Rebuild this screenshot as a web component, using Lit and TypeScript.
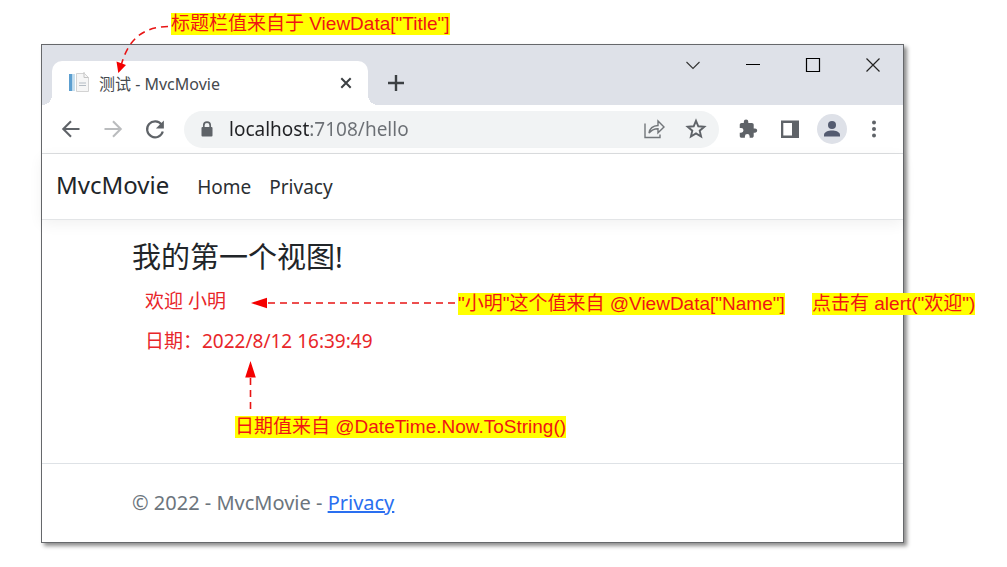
import { LitElement, html, css, svg } from 'lit';
import { customElement, property } from 'lit/decorators.js';

const glyphs = {
  doc: svg`<path d="M2 3h3.500v17H2z" fill="#5c9fd0"/><path d="M5.500 3h2.500v17H5.500z" fill="#c6dfef"/><path d="M9.500 2.500h8l4 4v14h-12z" fill="#f6f6f6" stroke="#d3d3d3"/><path d="M12 12h7M12 14.500h7" stroke="#b4bcc4" fill="none"/><path d="M17 1v5.500h4.500" stroke="#c4c4c4" fill="none"/>`,
  tabClose: svg`<path d="M7.300 7.300l9.400 9.400M16.700 7.300l-9.400 9.400" stroke="#3c4043" stroke-width="2"/>`,
  plus: svg`<path d="M12 4v16M4 12h16" stroke="#3c4043" stroke-width="2.400"/>`,
  chevron: svg`<path d="M5.500 9l6.500 6.500L18.500 9" stroke="#333" stroke-width="1.100" fill="none"/>`,
  minimize: svg`<path d="M5 11.500h14" stroke="#000"/>`,
  maximize: svg`<path d="M5.500 5.500h13v13h-13z" stroke="#000" stroke-width="1.200" fill="none"/>`,
  close: svg`<path d="M5.500 5.500l13 13M18.500 5.500l-13 13" stroke="#222" stroke-width="1.200"/>`,
  back: svg`<path d="M20.500 12H4.500M12 4.300L4.300 12l7.700 7.700" stroke="#5f6368" stroke-width="2.100" fill="none"/>`,
  forward: svg`<path d="M3.500 12h16M12 4.300l7.700 7.700-7.700 7.700" stroke="#babcbe" stroke-width="2.100" fill="none"/>`,
  reload: svg`<path d="M18.600 7.600A8 8 0 1 0 19.800 14.500" stroke="#5f6368" stroke-width="2.200" fill="none"/><path d="M20.900 3.500v8h-8z" fill="#5f6368"/>`,
  lock: svg`<rect x="6.500" y="10" width="11" height="9.500" rx="1" fill="#5f6368"/><path d="M8.800 10.500V8.300a3.200 3.200 0 0 1 6.400 0v2.200" stroke="#5f6368" stroke-width="1.700" fill="none"/>`,
  share: svg`<path d="M3 6.500v14h15v-3M7 16.200c.7-4.800 3.500-7.500 9-7.700V4l6 6-6 5.800v-4.100c-4.200.1-6.800 1.500-9 4.500z" stroke="#72767a" stroke-width="1.400" fill="none"/>`,
  star: svg`<path d="M12 3.800l2.300 5.500 6 .5-4.600 3.900 1.400 5.800-5.100-3.100-5.100 3.100 1.400-5.800-4.600-3.900 6-.5z" stroke="#5f6368" stroke-width="1.900" fill="none"/>`,
  puzzle: svg`<path d="M19.500 11H18V7c0-1.100-.9-2-2-2h-4V3.500a2.500 2.500 0 0 0-5 0V5H4.500c-1.100 0-2 .9-2 2v3.500H4a2.600 2.600 0 0 1 0 5.300H2.500v3.700c0 1.100.9 2 2 2h3.700V20a2.600 2.600 0 0 1 5.300 0v1.500H16c1.100 0 2-.9 2-2v-3.700h1.500a2.400 2.400 0 0 0 0-4.800z" transform="translate(1.500 1.500) scale(.9)" fill="#5f6368"/>`,
  panel: svg`<path d="M3 3.500h18v17.500H3zM5.300 6v12.500h8.700V6z" fill="#5f6368" fill-rule="evenodd"/>`,
  person: svg`<circle cx="12" cy="8" r="4" fill="#545b70"/><path d="M4 19.500v-1.500c0-3.300 4.500-4.500 8-4.500s8 1.200 8 4.500v1.500z" fill="#545b70"/>`,
  dots: svg`<g fill="#5f6368"><circle cx="12" cy="5.500" r="2"/><circle cx="12" cy="12" r="2"/><circle cx="12" cy="18.500" r="2"/></g>`,
};

@customElement('ui-glyph')
class UiGlyph extends LitElement {
  @property() name: keyof typeof glyphs = 'doc';
  static styles = css`
    :host { display: block; width: 24px; height: 24px; }
    svg { display: block; }
  `;
  render() {
    return html`<svg width="24" height="24" viewBox="0 0 24 24" aria-hidden="true">${glyphs[this.name]}</svg>`;
  }
}

@customElement('browser-chrome')
class BrowserChrome extends LitElement {
  static styles = css`
    :host { display: block; font-family: "Noto Sans", "Noto Sans CJK SC", sans-serif; }
    button { display: flex; align-items: center; justify-content: center; border: 0; padding: 0; background: none; width: 42px; height: 36px; flex: none; }
    .strip { display: flex; height: 60px; background: #dee1e8; padding-left: 10px; }
    .tab { position: relative; box-sizing: border-box; display: flex; align-items: center; align-self: flex-end; width: 316px; height: 44px; padding: 0 10px 0 15px; gap: 8px; background: #fff; border-radius: 10px 10px 0 0; font-size: 16px; color: #45494d; }
    .tab::before, .tab::after { content: ""; position: absolute; bottom: 0; width: 10px; height: 10px; }
    .tab::before { right: 100%; background: radial-gradient(circle at 0 0, transparent 10px, #fff 10px); }
    .tab::after { left: 100%; background: radial-gradient(circle at 100% 0, transparent 10px, #fff 10px); }
    .title { flex: 1; white-space: nowrap; }
    .tab button { width: 24px; height: 24px; }
    .new { align-self: flex-end; height: 44px; width: 56px; }
    .controls { display: flex; margin-left: auto; }
    .controls button { width: 60px; height: 40px; }
    .bar { display: flex; align-items: center; height: 48px; padding: 0 8px; border-bottom: 1px solid #dcdee0; background: #fff; }
    .address { display: flex; align-items: center; flex: 1; height: 37px; border-radius: 19px; background: #f1f3f4; margin: 0 8px; padding: 0 2px 0 11px; }
    .address input { flex: 1; min-width: 0; border: 0; padding: 0; margin-left: 10px; height: 30px; font: 19px "Noto Sans", sans-serif; color: transparent; background: linear-gradient(90deg, #202124 81px, #6b6f74 81px); background-clip: text; outline: 0; }
    .avatar { display: flex; align-items: center; justify-content: center; width: 30px; height: 30px; border-radius: 50%; background: #dee1e8; }
  `;
  render() {
    return html`
      <div class="strip">
        <div class="tab">
          <ui-glyph name="doc"></ui-glyph>
          <span class="title">测试 - MvcMovie</span>
          <button aria-label="Close tab"><ui-glyph name="tabClose"></ui-glyph></button>
        </div>
        <button class="new" aria-label="New tab"><ui-glyph name="plus"></ui-glyph></button>
        <div class="controls">
          <button aria-label="Search tabs"><ui-glyph name="chevron"></ui-glyph></button>
          <button aria-label="Minimize"><ui-glyph name="minimize"></ui-glyph></button>
          <button aria-label="Maximize"><ui-glyph name="maximize"></ui-glyph></button>
          <button aria-label="Close"><ui-glyph name="close"></ui-glyph></button>
        </div>
      </div>
      <div class="bar">
        <button aria-label="Back"><ui-glyph name="back"></ui-glyph></button>
        <button aria-label="Forward"><ui-glyph name="forward"></ui-glyph></button>
        <button aria-label="Reload"><ui-glyph name="reload"></ui-glyph></button>
        <div class="address">
          <ui-glyph name="lock"></ui-glyph>
          <input aria-label="Address" value="localhost:7108/hello" spellcheck="false">
          <button aria-label="Share"><ui-glyph name="share"></ui-glyph></button>
          <button aria-label="Bookmark"><ui-glyph name="star"></ui-glyph></button>
        </div>
        <button aria-label="Extensions"><ui-glyph name="puzzle"></ui-glyph></button>
        <button aria-label="Side panel"><ui-glyph name="panel"></ui-glyph></button>
        <button aria-label="Profile"><span class="avatar"><ui-glyph name="person"></ui-glyph></span></button>
        <button aria-label="Menu"><ui-glyph name="dots"></ui-glyph></button>
      </div>`;
  }
}

@customElement('app-root')
class AppRoot extends LitElement {
  static styles = css`
    :host { display: flex; position: relative; box-sizing: border-box; min-height: 100vh; padding: 44px 103px 24px 41px; background: #fff; font-family: "Noto Sans", "Noto Sans CJK SC", sans-serif; font-size: 19px; }
    .window { flex: 1; min-width: 0; display: flex; flex-direction: column; border: 1px solid #66686b; background: #fff; box-shadow: 3px 3px 4px rgba(0, 0, 0, 0.45); }
    .nav { display: flex; align-items: baseline; line-height: 65px; height: 65px; padding: 0 14px; gap: 18px; border-bottom: 1px solid #e3e5e7; box-shadow: 0 4px 14px rgba(0, 0, 0, 0.06); }
    .nav a { color: #2b2f33; text-decoration: none; }
    .nav .brand { font-size: 24px; line-height: 62px; margin-right: 10px; color: #212529; }
    main { flex: 1; padding: 19px 90px 0; }
    h1 { margin: 0 0 12px; font-size: 29px; line-height: 36px; font-weight: 400; color: #212529; }
    .line { display: block; margin: 0 0 12px; padding: 0 0 0 13px; border: 0; background: none; font: inherit; line-height: 28px; color: #e8262a; text-align: left; }
    footer { border-top: 1px solid #dee2e6; padding: 0 90px; font-size: 20px; line-height: 78px; color: #6c757d; }
    footer a { color: #2a6ff0; }
    .arrows { position: absolute; left: 0; top: 0; pointer-events: none; }
    .note { position: absolute; background: #ff0; color: #f01414; font: 19px/22px "Liberation Sans", "Noto Sans CJK SC", sans-serif; height: 22px; white-space: nowrap; }
    .note-title { left: 171px; top: 13px; }
    .note-name { left: 458px; top: 293px; }
    .note-alert { left: 812px; top: 293px; }
    .note-date { left: 235px; top: 416px; }
  `;
  render() {
    return html`
      <div class="window">
        <browser-chrome></browser-chrome>
        <nav class="nav">
          <a class="brand" href="#">MvcMovie</a>
          <a href="#">Home</a>
          <a href="#">Privacy</a>
        </nav>
        <main>
          <h1>我的第一个视图!</h1>
          <button class="line" @click=${() => alert('欢迎')}>欢迎 小明</button>
          <p class="line">日期：2022/8/12 16:39:49</p>
        </main>
        <footer>© 2022 - MvcMovie - <a href="#">Privacy</a></footer>
      </div>
      <svg class="arrows" width="480" height="420" viewBox="0 0 480 420" aria-hidden="true">
        <g stroke="#e81414" stroke-width="1.600" fill="none" stroke-dasharray="7 5">
          <path d="M168 26.500C144 27 129 38 121.500 64"/>
          <path d="M455 303H267"/>
          <path d="M250.500 409V376"/>
        </g>
        <path d="M118.300 73l-1.800-11.500 9.500 3.500zM251 303l16-5.300v10.600zM250.500 361l-5.300 16.500h10.600z" fill="#f40000"/>
      </svg>
      <span class="note note-title">标题栏值来自于 ViewData["Title"]</span>
      <span class="note note-name">"小明"这个值来自 @ViewData["Name"]</span>
      <span class="note note-alert">点击有 alert("欢迎")</span>
      <span class="note note-date">日期值来自 @DateTime.Now.ToString()</span>`;
  }
}
